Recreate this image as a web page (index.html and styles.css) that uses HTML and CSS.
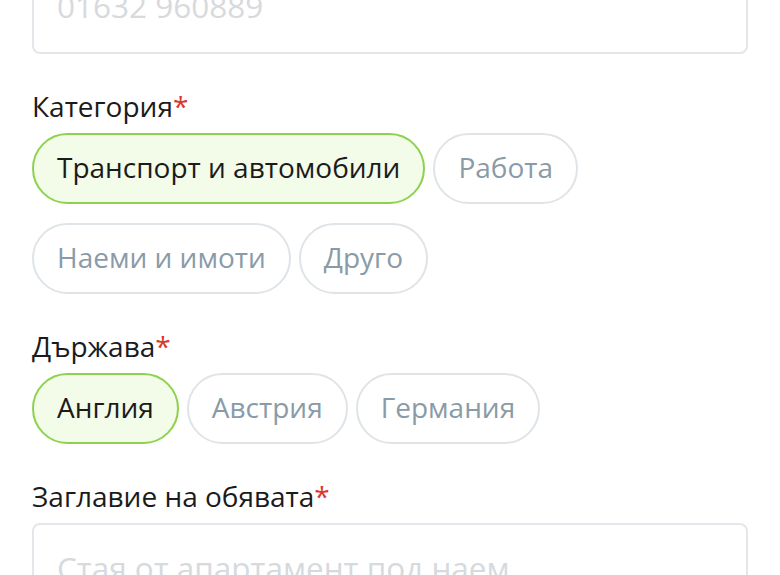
FILE: index.html
```html
<!DOCTYPE html>
<html lang="bg">
<head>
<meta charset="utf-8">
<link rel="stylesheet" href="styles.css">
</head>
<body>
<div class="form">
  <div class="field">
    <div class="input">01632 960889</div>
  </div>
  <div class="field">
    <div class="label">Категория<span class="req">*</span></div>
    <div class="chips">
      <span class="chip active">Транспорт и автомобили</span>
      <span class="chip">Работа</span>
      <span class="chip">Наеми и имоти</span>
      <span class="chip">Друго</span>
    </div>
  </div>
  <div class="field">
    <div class="label">Държава<span class="req">*</span></div>
    <div class="chips">
      <span class="chip active">Англия</span>
      <span class="chip">Австрия</span>
      <span class="chip">Германия</span>
    </div>
  </div>
  <div class="field">
    <div class="label">Заглавие на обявата<span class="req">*</span></div>
    <div class="input textarea">Стая от апартамент под наем</div>
  </div>
</div>
</body>
</html>
```

FILE: styles.css
```css
html, body {
  margin: 0;
  padding: 0;
  background: #ffffff;
}
body {
  font-family: "Open Sans", "Noto Sans", sans-serif;
  overflow: hidden;
  height: 575px;
}
.form {
  padding: 0 32px;
  margin-top: -42px;
}
.field {
  margin-bottom: 35px;
}
.label {
  font-size: 28px;
  line-height: 34px;
  color: #1b1b1b;
  margin-bottom: 10px;
}
.req {
  color: #d9382c;
}
.chips {
  display: flex;
  flex-wrap: wrap;
  gap: 19px 8px;
}
.chip {
  box-sizing: border-box;
  height: 71px;
  display: flex;
  align-items: center;
  padding: 0 23px 3px 23px;
  border: 2px solid #dfe4e8;
  border-radius: 36px;
  font-size: 28px;
  line-height: 34px;
  color: #8a9ba8;
  background: #ffffff;
}
.chip.active {
  border-color: #8ed14e;
  background: #f3fbe9;
  color: #1b1b1b;
}
.input {
  box-sizing: border-box;
  border: 2px solid #e3e6ea;
  border-radius: 8px;
  padding: 24px 23px;
  font-size: 31.5px;
  font-weight: 400;
  line-height: 44px;
  color: #d6dade;
}
.input.textarea {
  padding-top: 21px;
  min-height: 120px;
}
```
